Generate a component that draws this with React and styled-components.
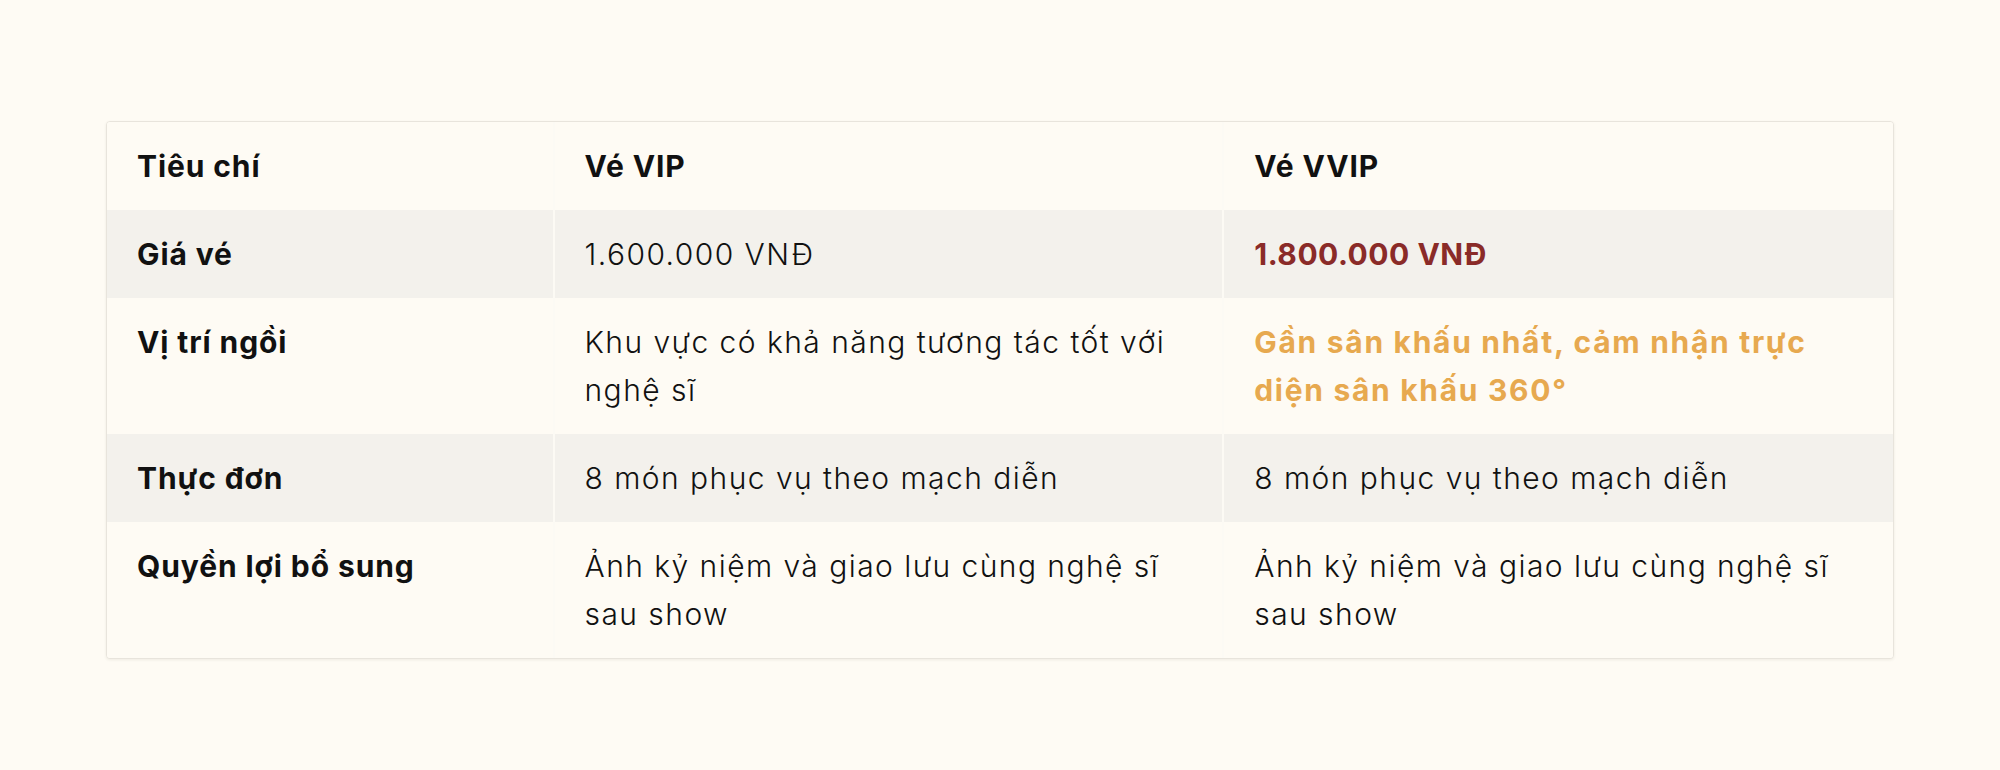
import React from "react";
import styled, { createGlobalStyle } from "styled-components";

const Global = createGlobalStyle`
  html, body { margin: 0; padding: 0; background: #fefbf4; }
  body { font-family: "Inter", "Liberation Sans", sans-serif; color: #111; }
`;

const Page = styled.main`
  box-sizing: border-box;
  min-height: 770px;
  padding: 121px 106px 0;
  background: #fefbf4;
`;

const Frame = styled.div`
  border: 1px solid #e8e4dc;
  border-radius: 4px;
  box-shadow: 0 1px 3px rgba(60, 50, 30, 0.08);
  overflow: hidden;
  background: #fefbf4;
`;

const Table = styled.table`
  width: 100%;
  border-collapse: collapse;
  table-layout: fixed;
`;

const Row = styled.tr`
  background: ${(p) => (p.$striped ? "#f3f1ec" : "#fefbf4")};
`;

const tones = {
  plain: { weight: 300, spacing: "1.45px", color: "#111" },
  strong: { weight: 700, spacing: "0.9px", color: "#111" },
  price: { weight: 700, spacing: "0.5px", color: "#8a2b28" },
  highlight: { weight: 700, spacing: "1.7px", color: "#e7a94f" },
};

const Cell = styled.td`
  box-sizing: border-box;
  padding: 20px 30px;
  font-size: 30px;
  line-height: 48px;
  vertical-align: top;
  text-align: left;
  font-weight: ${(p) => tones[p.$tone || "plain"].weight};
  letter-spacing: ${(p) => tones[p.$tone || "plain"].spacing};
  color: ${(p) => tones[p.$tone || "plain"].color};
  border-left: 2px solid #fcfaf4;
  &:first-child { border-left: none; }
`;

const HeadCell = styled(Cell).attrs({ as: "th" })`
  width: ${(p) => p.$w};
`;

const rows = [
  { label: "Giá vé", vip: "1.600.000 VNĐ", vvip: "1.800.000 VNĐ", vvipTone: "price" },
  { label: "Vị trí ngồi", vip: "Khu vực có khả năng tương tác tốt với nghệ sĩ", vvip: "Gần sân khấu nhất, cảm nhận trực diện sân khấu 360°", vvipTone: "highlight" },
  { label: "Thực đơn", vip: "8 món phục vụ theo mạch diễn", vvip: "8 món phục vụ theo mạch diễn" },
  { label: "Quyền lợi bổ sung", vip: "Ảnh kỷ niệm và giao lưu cùng nghệ sĩ sau show", vvip: "Ảnh kỷ niệm và giao lưu cùng nghệ sĩ sau show" },
];

export default function App() {
  return (
    <>
      <Global />
      <Page>
        <Frame>
          <Table>
            <thead>
              <Row>
                <HeadCell $w="25%" $tone="strong">Tiêu chí</HeadCell>
                <HeadCell $w="37.5%" $tone="strong">Vé VIP</HeadCell>
                <HeadCell $w="37.5%" $tone="strong">Vé VVIP</HeadCell>
              </Row>
            </thead>
            <tbody>
              {rows.map((r, i) => (
                <Row key={r.label} $striped={i % 2 === 0}>
                  <Cell $tone="strong">{r.label}</Cell>
                  <Cell>{r.vip}</Cell>
                  <Cell $tone={r.vvipTone}>{r.vvip}</Cell>
                </Row>
              ))}
            </tbody>
          </Table>
        </Frame>
      </Page>
    </>
  );
}
